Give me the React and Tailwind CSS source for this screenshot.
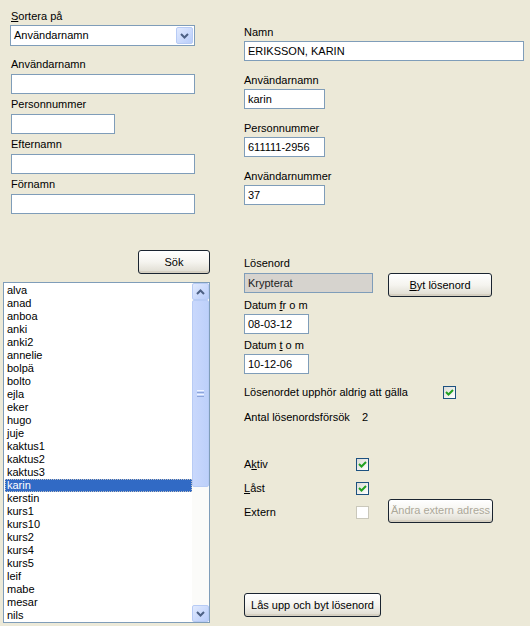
import React from 'react';

const users = [
  'alva', 'anad', 'anboa', 'anki', 'anki2', 'annelie', 'bolpä', 'bolto', 'ejla', 'eker',
  'hugo', 'juje', 'kaktus1', 'kaktus2', 'kaktus3', 'karin', 'kerstin', 'kurs1', 'kurs10',
  'kurs2', 'kurs4', 'kurs5', 'leif', 'mabe', 'mesar', 'nils',
];

// små hjälpkomponenter i XP-stil
function Label({ children, className = '' }) {
  return <div className={`h-[13px] leading-[13px] whitespace-nowrap ${className}`}>{children}</div>;
}

function TextBox({ value = '', className = '', disabled = false }) {
  return (
    <div
      className={`h-[20px] border border-[#7f9db9] px-[3px] leading-[18px] whitespace-nowrap overflow-hidden ${
        disabled ? 'bg-[#d6d3ce] text-[#222]' : 'bg-white'
      } ${className}`}
    >
      {value}
    </div>
  );
}

function Button({ children, className = '', disabled = false }) {
  return (
    <div
      className={`flex items-center justify-center border border-[#1a2430] rounded-[3px] bg-gradient-to-b from-white via-[#f5f4ef] to-[#dedbd0] shadow-[inset_0_-2px_0_#d6d0c2,inset_0_1px_0_#ffffff] whitespace-nowrap ${
        disabled ? 'text-[#aca899]' : 'text-black'
      } ${className}`}
    >
      {children}
    </div>
  );
}

function CheckBox({ checked = false, disabled = false }) {
  return (
    <div
      className={`w-[13px] h-[13px] border flex items-center justify-center ${
        disabled ? 'border-[#cac8bb] bg-white' : 'border-[#1c5180] bg-gradient-to-br from-[#dcdcd7] to-white'
      }`}
    >
      {checked && (
        <svg width="9" height="9" viewBox="0 0 9 9">
          <path d="M1 4 L3.5 6.5 L8 2" fill="none" stroke="#21a121" strokeWidth="2" />
        </svg>
      )}
    </div>
  );
}

function Chevron({ up = false }) {
  return (
    <svg width="9" height="6" viewBox="0 0 9 6">
      <path
        d={up ? 'M1 5 L4.5 1.5 L8 5' : 'M1 1 L4.5 4.5 L8 1'}
        fill="none"
        stroke="#4d6185"
        strokeWidth="2"
      />
    </svg>
  );
}

function ScrollBtn({ up }) {
  return (
    <div className="w-[17px] h-[17px] rounded-[2px] border border-[#b7cbf5] bg-gradient-to-br from-[#e1eafe] to-[#b9cdfa] flex items-center justify-center">
      <Chevron up={up} />
    </div>
  );
}

export default function App() {
  return (
    <div
      className="w-[530px] h-[626px] bg-[#ece9d8] text-[11px] text-black flex overflow-hidden"
      style={{ fontFamily: '"Liberation Sans", Arial, sans-serif' }}
    >
      {/* VÄNSTER: sökning och lista */}
      <div className="w-[244px] flex flex-col">
        <Label className="mt-[10px] ml-[11px]">
          <span className="underline">S</span>ortera på
        </Label>
        <div className="mt-[2px] ml-[10px] w-[185px] h-[21px] border border-[#7f9db9] bg-white flex items-center">
          <span className="flex-1 pl-[3px]">Användarnamn</span>
          <div className="w-[17px] h-[17px] mr-[1px] rounded-[2px] border border-[#b7cbf5] bg-gradient-to-br from-[#e1eafe] to-[#b9cdfa] flex items-center justify-center">
            <Chevron />
          </div>
        </div>

        <Label className="mt-[12px] ml-[11px]">Användarnamn</Label>
        <TextBox className="mt-[3px] ml-[11px] w-[184px]" />
        <Label className="mt-[4px] ml-[11px]">Personnummer</Label>
        <TextBox className="mt-[3px] ml-[11px] w-[104px]" />
        <Label className="mt-[4px] ml-[11px]">Efternamn</Label>
        <TextBox className="mt-[3px] ml-[11px] w-[184px]" />
        <Label className="mt-[4px] ml-[11px]">Förnamn</Label>
        <TextBox className="mt-[3px] ml-[11px] w-[184px]" />

        <Button className="mt-[36px] ml-[138px] w-[72px] h-[24px]">Sök</Button>

        <div className="mt-[8px] ml-[3px] w-[207px] h-[341px] border border-[#7f9db9] bg-white flex">
          <div className="flex-1 pt-[1px] pl-[1px] flex flex-col">
            {users.map((u) => (
              <div
                key={u}
                className={`h-[13px] leading-[13px] pl-[2px] ${
                  u === 'karin' ? 'bg-[#316ac5] text-white outline-1 outline-dotted outline-[#c0c0c0] -outline-offset-1' : ''
                }`}
              >
                {u}
              </div>
            ))}
          </div>
          <div className="w-[17px] bg-[#fbfbf9] flex flex-col">
            <ScrollBtn up />
            <div className="h-[187px] rounded-[2px] border border-[#b7cbf5] bg-gradient-to-r from-[#c9d8fc] to-[#bdd0fa] flex flex-col items-center justify-center gap-[1px]">
              <div className="w-[7px] h-px bg-[#eef3ff]" />
              <div className="w-[7px] h-px bg-[#8ca4da]" />
              <div className="w-[7px] h-px bg-[#eef3ff]" />
              <div className="w-[7px] h-px bg-[#8ca4da]" />
            </div>
            <div className="flex-1" />
            <ScrollBtn />
          </div>
        </div>
      </div>

      {/* HÖGER: användaruppgifter */}
      <div className="flex flex-col">
        <Label className="mt-[26px]">Namn</Label>
        <TextBox className="mt-[2px] w-[280px]" value="ERIKSSON, KARIN" />
        <Label className="mt-[13px]">Användarnamn</Label>
        <TextBox className="mt-[2px] w-[81px]" value="karin" />
        <Label className="mt-[13px]">Personnummer</Label>
        <TextBox className="mt-[2px] w-[81px]" value="611111-2956" />
        <Label className="mt-[13px]">Användarnummer</Label>
        <TextBox className="mt-[2px] w-[81px]" value="37" />

        <Label className="mt-[52px]">Lösenord</Label>
        <div className="mt-[3px] flex items-start">
          <TextBox className="w-[129px]" value="Krypterat" disabled />
          <Button className="ml-[15px] w-[104px] h-[24px]">
            <span>
              <span className="underline">B</span>yt lösenord
            </span>
          </Button>
        </div>

        <Label className="mt-[2px]">
          Datum <span className="underline">f</span>r o m
        </Label>
        <TextBox className="mt-[2px] w-[65px]" value="08-03-12" />
        <Label className="mt-[5px]">
          Datum <span className="underline">t</span> o m
        </Label>
        <TextBox className="mt-[2px] w-[65px]" value="10-12-06" />

        <div className="mt-[12px] h-[13px] flex items-center">
          <span className="w-[199px]">Lösenordet upphör aldrig att gälla</span>
          <CheckBox checked />
        </div>
        <div className="mt-[12px] h-[13px] flex items-center">
          <span className="w-[118px]">Antal lösenordsförsök</span>
          <span>2</span>
        </div>

        <div className="mt-[28px] h-[24px] flex items-center">
          <span className="w-[112px]">
            A<span className="underline">k</span>tiv
          </span>
          <CheckBox checked />
        </div>
        <div className="h-[24px] flex items-center">
          <span className="w-[112px]">
            <span className="underline">L</span>åst
          </span>
          <CheckBox checked />
        </div>
        <div className="h-[24px] flex items-center">
          <span className="w-[112px]">Extern</span>
          <CheckBox disabled />
          <Button disabled className="ml-[19px] -mt-[3px] w-[105px] h-[24px]">
            Ändra extern adress
          </Button>
        </div>

        <Button className="mt-[69px] w-[137px] h-[24px]">Lås upp och byt lösenord</Button>
      </div>
    </div>
  );
}
